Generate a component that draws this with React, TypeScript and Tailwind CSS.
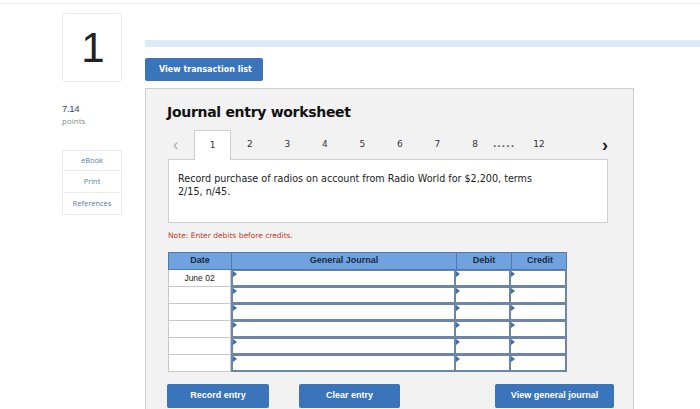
import React from 'react';

const rows = ['June 02', '', '', '', '', ''];
const tabs = ['2', '3', '4', '5', '6', '7'];

function Marker() {
  return (
    <span className="absolute left-0 top-0 w-0 h-0 border-t-[3px] border-b-[3px] border-l-[4px] border-t-transparent border-b-transparent border-l-[#3b6fb0]" />
  );
}

function InputCell({ className }: { className: string }) {
  return (
    <div className={`relative h-full bg-white border-2 border-[#6d86a8] ${className}`}>
      <Marker />
    </div>
  );
}

export default function App() {
  return (
    <div className="w-[700px] h-[409px] overflow-hidden bg-white font-['Liberation_Sans',Arial,sans-serif]">
      <div className="h-[4px] border-b border-[#ececec]" />
      <div className="flex pl-[62px]">
        {/* left column */}
        <div className="w-[60px] shrink-0 pt-[9px]">
          <div className="h-[69px] border border-[#ececec] rounded-[3px] flex items-center justify-center pl-[2px]">
            <span className="text-[42px] leading-none font-light text-[#222]">1</span>
          </div>
          <div className="mt-[21px] text-[9.5px] leading-[11px] text-[#2f4c70] tracking-[-0.3px]">7.14</div>
          <div className="mt-[2px] text-[8px] leading-[10px] text-[#8a8a8a] font-['Open_Sans',sans-serif]">points</div>
          <div className="mt-[24px] flex flex-col">
            {['eBook', 'Print', 'References'].map((t) => (
              <div
                key={t}
                className="h-[22px] border border-[#ececec] border-t-0 first:border-t first:h-[21px] flex items-center justify-center text-[7.5px] text-[#5a7cab] font-['Open_Sans',sans-serif]"
              >
                {t}
              </div>
            ))}
          </div>
        </div>

        {/* right column */}
        <div className="ml-[23px] flex-1 pt-[36px]">
          <div className="h-[7px] bg-[#dde9f7]" />
          <button className="mt-[11px] h-[23px] w-[118px] bg-[#3a74bb] rounded-[2px] text-white text-[8px] font-bold font-['DejaVu_Sans',Verdana,sans-serif] text-left pl-[14px] block">
            View transaction list
          </button>
          <div className="mt-[7px] w-[489px] h-[330px] bg-[#f2f2f2] border border-[#cfcfcf] pl-[21px] pr-[15px]">
            <div className="pt-[14px] text-[14px] leading-[18px] font-bold text-[#111] font-['DejaVu_Sans',Verdana,sans-serif] tracking-[-0.3px]">
              Journal entry worksheet
            </div>
            {/* tabs */}
            <div className="mt-[8px] ml-[1px] w-[440px] h-[30px] flex items-end text-[9px] text-[#333] font-['DejaVu_Sans',Verdana,sans-serif]">
              <span className="w-[26px] h-[28px] flex items-center pl-[5px] text-[16px] text-[#aaa] font-['Liberation_Sans',sans-serif]">‹</span>
              <div className="w-[37px] h-[30px] bg-white border border-b-0 border-[#cfcfcf] flex items-center justify-center -mb-px relative z-10">1</div>
              {tabs.map((t) => (
                <span key={t} className="w-[37.5px] h-[28px] flex items-center justify-center">{t}</span>
              ))}
              <span className="w-[38px] h-[28px] flex items-center justify-center">8</span>
              <span className="w-[20px] h-[28px] flex items-center justify-center tracking-[1px] font-bold text-[#555]">.....</span>
              <span className="w-[50px] h-[28px] flex items-center justify-center">12</span>
              <span className="ml-auto h-[28px] flex items-center text-[18px] font-bold text-[#222] font-['Liberation_Sans',sans-serif]">›</span>
            </div>
            <div className="ml-[1px] h-[64px] w-[440px] bg-white border border-[#cfcfcf] px-[9px] pt-[12px] text-[9.6px] leading-[13px] text-[#222] font-['DejaVu_Sans',Verdana,sans-serif]">
              Record purchase of radios on account from Radio World for $2,200, terms
              <br />
              2/15, n/45.
            </div>
            <div className="mt-[8px] ml-[1px] text-[7.5px] leading-[10px] text-[#c0392b] font-['DejaVu_Sans',Verdana,sans-serif]">
              Note: Enter debits before credits.
            </div>
            {/* table */}
            <div className="mt-[11px] ml-[1px] w-[399px]">
              <div className="grid grid-cols-[63px_225px_55px_56px] h-[18px] bg-[#6fa2df] border border-[#4f78ab] text-[9px] font-bold text-[#1b2a40]">
                <div className="flex items-center justify-center border-r border-[#4f78ab]">Date</div>
                <div className="flex items-center justify-center border-r border-[#4f78ab]">General Journal</div>
                <div className="flex items-center justify-center border-r border-[#4f78ab]">Debit</div>
                <div className="flex items-center justify-center">Credit</div>
              </div>
              {rows.map((d, i) => (
                <div key={i} className="grid grid-cols-[63px_225px_55px_56px] h-[17px]">
                  <div className="bg-white border border-t-0 border-[#c9c9c9] flex items-center justify-center text-[8.5px] text-[#222]">{d}</div>
                  <InputCell className="border-t-[1px]" />
                  <InputCell className="border-l-0 border-t-[1px]" />
                  <InputCell className="border-l-0 border-t-[1px]" />
                </div>
              ))}
            </div>
            {/* buttons */}
            <div className="mt-[12px] flex text-white text-[9px] font-bold">
              <button className="shrink-0 w-[102px] h-[24px] bg-[#3a74bb] rounded-[2px]">Record entry</button>
              <button className="shrink-0 ml-[30px] w-[101px] h-[24px] bg-[#3a74bb] rounded-[2px]">Clear entry</button>
              <button className="shrink-0 ml-[95px] w-[119px] h-[24px] bg-[#3a74bb] rounded-[2px]">View general journal</button>
            </div>
          </div>
        </div>
      </div>
    </div>
  );
}
